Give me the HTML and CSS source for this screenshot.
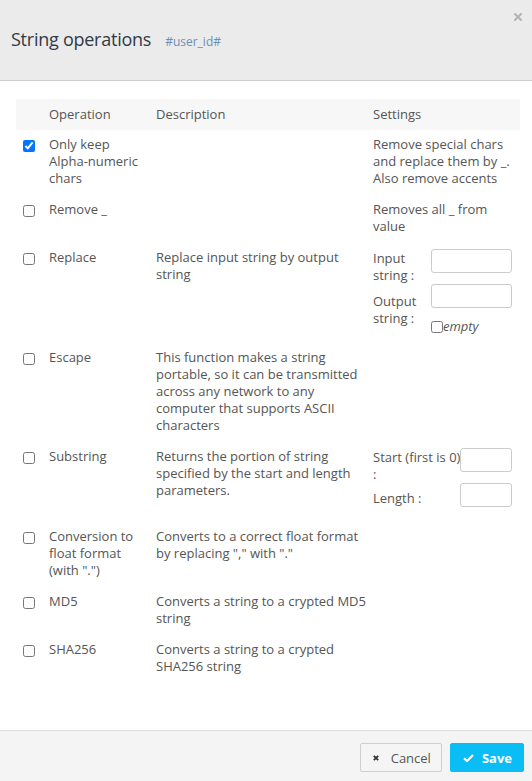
FILE: index.html
```html
<!DOCTYPE html>
<html lang="en">
<head>
<meta charset="utf-8">
<title>String operations</title>
<link rel="stylesheet" href="styles.css">
</head>
<body>
<div class="modal">
  <header class="modal-header">
    <div class="heading">
      <h1 class="title">String operations</h1>
      <span class="tag">#user_id#</span>
    </div>
    <button class="close" type="button" aria-label="Close">
      <svg width="8" height="8" viewBox="0 0 8 8"><path d="M1 1L7 7M7 1L1 7" stroke="#b3b3b3" stroke-width="2" stroke-linecap="square"/></svg>
    </button>
  </header>

  <main class="modal-body">
    <table class="ops">
      <colgroup>
        <col class="c-check">
        <col class="c-op">
        <col class="c-desc">
        <col class="c-set">
      </colgroup>
      <thead>
        <tr>
          <th></th>
          <th>Operation</th>
          <th>Description</th>
          <th class="th-set">Settings</th>
        </tr>
      </thead>
      <tbody>
        <tr>
          <td class="chk"><input type="checkbox" checked></td>
          <td>Only keep Alpha-numeric chars</td>
          <td></td>
          <td class="set">Remove special chars and replace them by _. Also remove accents</td>
        </tr>
        <tr>
          <td class="chk"><input type="checkbox"></td>
          <td>Remove _</td>
          <td></td>
          <td class="set">Removes all _ from value</td>
        </tr>
        <tr>
          <td class="chk"><input type="checkbox"></td>
          <td>Replace</td>
          <td>Replace input string by output string</td>
          <td class="set">
            <div class="kv">
              <span class="lbl lbl-a">Input string :</span>
              <div class="fld"><input type="text" class="txt"></div>
              <span class="lbl lbl-b">Output string :</span>
              <div class="fld">
                <input type="text" class="txt">
                <label class="empty"><input type="checkbox">empty</label>
              </div>
            </div>
          </td>
        </tr>
        <tr>
          <td class="chk"><input type="checkbox"></td>
          <td>Escape</td>
          <td>This function makes a string portable, so it can be transmitted across any network to any computer that supports ASCII characters</td>
          <td class="set"></td>
        </tr>
        <tr>
          <td class="chk"><input type="checkbox"></td>
          <td>Substring</td>
          <td>Returns the portion of string specified by the start and length parameters.</td>
          <td class="set">
            <div class="kv narrow">
              <span class="lbl lbl-a"><span class="nw">Start (first is 0)</span> :</span>
              <div class="fld"><input type="text" class="txt"></div>
              <span class="lbl lbl-b">Length :</span>
              <div class="fld last"><input type="text" class="txt"></div>
            </div>
          </td>
        </tr>
        <tr>
          <td class="chk"><input type="checkbox"></td>
          <td>Conversion to float format (with ".")</td>
          <td>Converts to a correct float format by replacing "," with "."</td>
          <td class="set"></td>
        </tr>
        <tr>
          <td class="chk"><input type="checkbox"></td>
          <td>MD5</td>
          <td>Converts a string to a crypted MD5 string</td>
          <td class="set"></td>
        </tr>
        <tr>
          <td class="chk"><input type="checkbox"></td>
          <td>SHA256</td>
          <td>Converts a string to a crypted SHA256 string</td>
          <td class="set"></td>
        </tr>
      </tbody>
    </table>
  </main>

  <footer class="modal-footer">
    <button class="btn btn-cancel" type="button">
      <svg width="6" height="6" viewBox="0 0 6 6"><path d="M0.8 0.8L5.2 5.2M5.2 0.8L0.8 5.2" stroke="#333" stroke-width="1.8"/></svg>
      <span>Cancel</span>
    </button>
    <button class="btn btn-save" type="button">
      <svg width="11" height="8" viewBox="0 0 11 8"><path d="M1 4.2L4 7L10 1" fill="none" stroke="#fff" stroke-width="2.2"/></svg>
      <span>Save</span>
    </button>
  </footer>
</div>
</body>
</html>
```

FILE: styles.css
```css
html, body {
  margin: 0;
  padding: 0;
}

body {
  font-family: "Open Sans", "Liberation Sans", sans-serif;
  font-size: 13px;
  line-height: 17px;
  color: #555;
  background: #fff;
}

.modal {
  display: flex;
  flex-direction: column;
  height: 100vh;
}

.modal-header {
  position: relative;
  height: 80px;
  flex: none;
  background: #ebebeb;
  border-bottom: 1px solid #cdcdcd;
  display: flex;
  align-items: center;
  padding: 0 11px;
  box-sizing: border-box;
  height: 81px;
}

.heading {
  display: flex;
  align-items: baseline;
  gap: 14px;
  margin-top: -2px;
}

.title {
  margin: 0;
  font-size: 18px;
  font-weight: 400;
  letter-spacing: -0.25px;
  line-height: 24px;
  color: #323a45;
}

.tag {
  font-size: 12px;
  color: #6e8db5;
}

.close {
  position: absolute;
  top: 13px;
  right: 10px;
  width: 8px;
  height: 8px;
  padding: 0;
  border: 0;
  background: none;
  display: block;
}

.close svg {
  display: block;
}

.modal-body {
  flex: 1;
  padding: 18px 12px 0 16px;
}

.ops {
  width: 504px;
  table-layout: fixed;
  border-collapse: collapse;
}

.c-check { width: 25px; }
.c-op { width: 107px; }
.c-desc { width: 222px; }
.c-set { width: 150px; }

.ops th {
  background: #f7f7f7;
  font-weight: 400;
  text-align: left;
  padding: 7px 0 7px 8px;
  color: #555;
}

.ops th.th-set {
  padding-left: 3px;
}

.ops td {
  vertical-align: top;
  padding: 6px 0 8px 8px;
}

.ops td.chk {
  padding-left: 7px;
}

.ops td.set {
  padding-left: 3px;
  padding-right: 8px;
}

.chk input {
  display: block;
  margin: 4px 0 0 0;
  width: 12px;
  height: 12px;
}

.kv {
  display: grid;
  grid-template-columns: 1fr 81px;
  align-items: start;
}

.kv.narrow {
  grid-template-columns: 1fr 52px;
}

.lbl-a {
  padding-top: 1px;
}

.lbl-b {
  align-self: center;
}

.nw {
  white-space: nowrap;
}

.txt {
  display: block;
  width: 100%;
  height: 24px;
  box-sizing: border-box;
  margin: 0;
  border: 1px solid #cccccc;
  border-radius: 3px;
  background: #fff;
}

.fld.last {
  padding-bottom: 7px;
}

.empty {
  display: flex;
  align-items: center;
  margin-top: 10px;
  font-style: italic;
}

.empty input {
  margin: 0;
  width: 12px;
  height: 12px;
}

.modal-footer {
  flex: none;
  background: #f4f4f4;
  border-top: 1px solid #dcdcdc;
  display: flex;
  justify-content: flex-end;
  align-items: flex-start;
  gap: 8px;
  padding: 12px 8px 0 0;
  box-sizing: border-box;
  height: 51px;
}

.btn {
  display: inline-flex;
  align-items: center;
  height: 29px;
  margin: 0;
  font-family: "Open Sans", "Liberation Sans", sans-serif;
  font-size: 13px;
  border-radius: 2px;
  cursor: pointer;
}

.btn svg {
  display: block;
}

.btn-cancel {
  padding: 0 10px 0 12px;
  gap: 12px;
  background: #f5f5f5;
  border: 1px solid #cfcfcf;
  color: #555;
}

.btn-save {
  padding: 0 11px 0 12px;
  gap: 8px;
  background: #0bbdf5;
  border: 1px solid #0bbdf5;
  color: #fff;
  font-weight: 700;
}
```
